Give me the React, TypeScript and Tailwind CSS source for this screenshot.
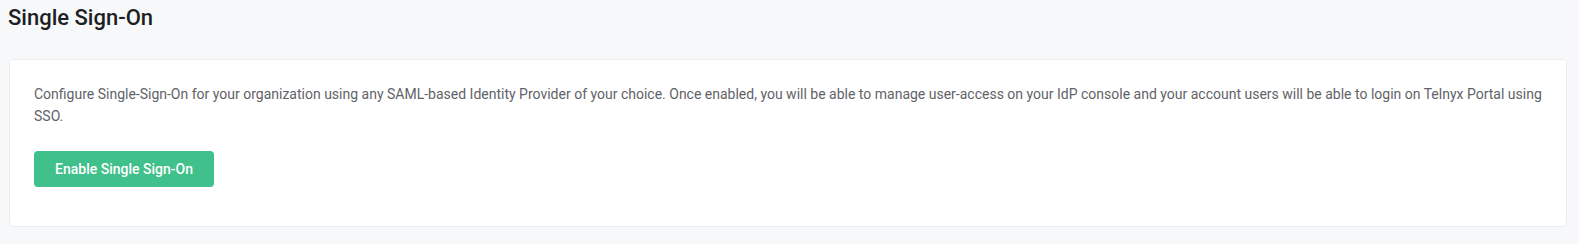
export default function App() {
    return (
        <div className="min-h-[244px] bg-[#f7f8fa] pl-2 pr-3 pt-[4px] font-['Roboto',sans-serif]">
            <h1 className="text-[22px] leading-[28px] font-medium text-[#1c1f23]">Single Sign-On</h1>

            <div className="mt-[27px] ml-px rounded border border-[#eceef1] bg-white px-6 pt-[23px] pb-[39px]">
                <p className="text-[14px] leading-[22px] text-[#5f6368]">
                    Configure Single-Sign-On for your organization using any SAML-based Identity Provider of your
                    choice. Once enabled, you will be able to manage user-access on your IdP console and your account
                    users will be able to login on Telnyx Portal using SSO.
                </p>

                <button
                    type="button"
                    className="mt-6 h-9 w-[180px] rounded bg-[#40c08a] text-[14px] font-medium text-white"
                >
                    Enable Single Sign-On
                </button>
            </div>
        </div>
    );
}
